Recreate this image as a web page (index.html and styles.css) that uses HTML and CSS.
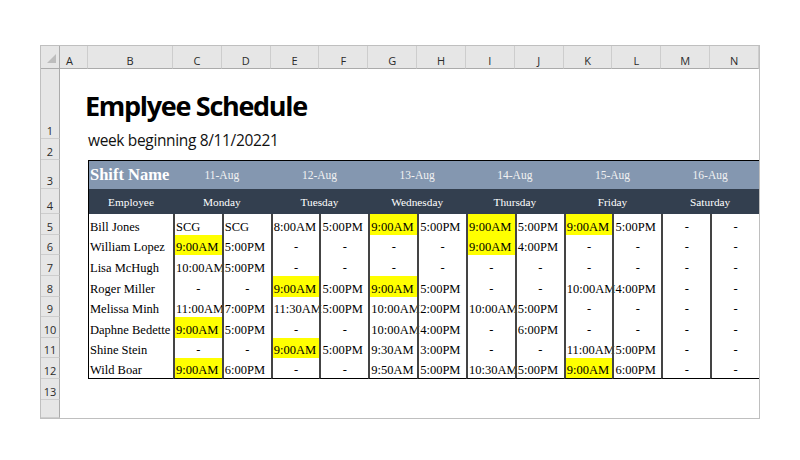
FILE: index.html
```html
<!DOCTYPE html>
<html>
<head>
<meta charset="utf-8">
<title>Employee Schedule</title>
<link rel="stylesheet" href="styles.css">
</head>
<body>
<div class="sheet">
  <div class="row">
    <div class="corner"><svg width="9" height="9" viewBox="0 0 9 9"><polygon points="9,0 9,9 0,9" fill="#bdbdbd"/></svg></div>
    <div class="ch ch-a">A</div><div class="ch">B</div><div class="ch">C</div><div class="ch">D</div><div class="ch">E</div><div class="ch">F</div><div class="ch">G</div><div class="ch">H</div><div class="ch">I</div><div class="ch">J</div><div class="ch">K</div><div class="ch">L</div><div class="ch">M</div><div class="ch">N</div>
  </div>

  <div class="title-cell">
    <h1>Emplyee Schedule</h1>
    <p>week beginning 8/11/20221</p>
  </div>

  <div class="row"><div class="rh">1</div><div class="blank"></div></div>
  <div class="row"><div class="rh">2</div><div class="blank"></div></div>

  <div class="row">
    <div class="rh">3</div><div class="blank"></div>
    <div class="sh sh-name">Shift Name</div>
    <div class="sh">11-Aug</div><div class="sh">12-Aug</div><div class="sh">13-Aug</div><div class="sh">14-Aug</div><div class="sh">15-Aug</div><div class="sh">16-Aug</div>
  </div>

  <div class="row">
    <div class="rh">4</div><div class="blank"></div>
    <div class="dh dh-emp">Employee</div>
    <div class="dh">Monday</div><div class="dh">Tuesday</div><div class="dh">Wednesday</div><div class="dh">Thursday</div><div class="dh">Friday</div><div class="dh">Saturday</div>
  </div>

  <div class="row">
    <div class="rh">5</div><div class="blank"></div>
    <div class="nm">Bill Jones</div>
    <div class="c">SCG</div><div class="c">SCG</div><div class="c">8:00AM</div><div class="c">5:00PM</div><div class="c y">9:00AM</div><div class="c">5:00PM</div><div class="c y">9:00AM</div><div class="c">5:00PM</div><div class="c y">9:00AM</div><div class="c">5:00PM</div><div class="c m">-</div><div class="c m">-</div>
  </div>

  <div class="row">
    <div class="rh">6</div><div class="blank"></div>
    <div class="nm">William Lopez</div>
    <div class="c y">9:00AM</div><div class="c">5:00PM</div><div class="c m">-</div><div class="c m">-</div><div class="c m">-</div><div class="c m">-</div><div class="c y">9:00AM</div><div class="c">4:00PM</div><div class="c m">-</div><div class="c m">-</div><div class="c m">-</div><div class="c m">-</div>
  </div>

  <div class="row">
    <div class="rh">7</div><div class="blank"></div>
    <div class="nm">Lisa McHugh</div>
    <div class="c">10:00AM</div><div class="c">5:00PM</div><div class="c m">-</div><div class="c m">-</div><div class="c m">-</div><div class="c m">-</div><div class="c m">-</div><div class="c m">-</div><div class="c m">-</div><div class="c m">-</div><div class="c m">-</div><div class="c m">-</div>
  </div>

  <div class="row">
    <div class="rh">8</div><div class="blank"></div>
    <div class="nm">Roger Miller</div>
    <div class="c m">-</div><div class="c m">-</div><div class="c y">9:00AM</div><div class="c">5:00PM</div><div class="c y">9:00AM</div><div class="c">5:00PM</div><div class="c m">-</div><div class="c m">-</div><div class="c">10:00AM</div><div class="c">4:00PM</div><div class="c m">-</div><div class="c m">-</div>
  </div>

  <div class="row">
    <div class="rh">9</div><div class="blank"></div>
    <div class="nm">Melissa Minh</div>
    <div class="c">11:00AM</div><div class="c">7:00PM</div><div class="c">11:30AM</div><div class="c">5:00PM</div><div class="c">10:00AM</div><div class="c">2:00PM</div><div class="c">10:00AM</div><div class="c">5:00PM</div><div class="c m">-</div><div class="c m">-</div><div class="c m">-</div><div class="c m">-</div>
  </div>

  <div class="row">
    <div class="rh">10</div><div class="blank"></div>
    <div class="nm">Daphne Bedette</div>
    <div class="c y">9:00AM</div><div class="c">5:00PM</div><div class="c m">-</div><div class="c m">-</div><div class="c">10:00AM</div><div class="c">4:00PM</div><div class="c m">-</div><div class="c">6:00PM</div><div class="c m">-</div><div class="c m">-</div><div class="c m">-</div><div class="c m">-</div>
  </div>

  <div class="row">
    <div class="rh">11</div><div class="blank"></div>
    <div class="nm">Shine Stein</div>
    <div class="c m">-</div><div class="c m">-</div><div class="c y">9:00AM</div><div class="c">5:00PM</div><div class="c">9:30AM</div><div class="c">3:00PM</div><div class="c m">-</div><div class="c m">-</div><div class="c">11:00AM</div><div class="c">5:00PM</div><div class="c m">-</div><div class="c m">-</div>
  </div>

  <div class="row last">
    <div class="rh">12</div><div class="blank"></div>
    <div class="nm">Wild Boar</div>
    <div class="c y">9:00AM</div><div class="c">6:00PM</div><div class="c m">-</div><div class="c m">-</div><div class="c">9:50AM</div><div class="c">5:00PM</div><div class="c">10:30AM</div><div class="c">5:00PM</div><div class="c y">9:00AM</div><div class="c">6:00PM</div><div class="c m">-</div><div class="c m">-</div>
  </div>

  <div class="row"><div class="rh">13</div><div class="blank wide"></div></div>
  <div class="row"><div class="rh"></div><div class="blank wide"></div></div>
</div>
</body>
</html>
```

FILE: styles.css
```css
* {
  box-sizing: border-box;
  margin: 0;
  padding: 0;
}

body {
  background: #ffffff;
  font-family: "Open Sans", "Noto Sans", sans-serif;
}

.sheet {
  margin: 45px 0 0 40px;
  width: 720px;
  height: 374px;
  border: 1px solid #bfbfbf;
  display: grid;
  grid-template-columns: 19px 28px 85px repeat(12, minmax(0, 1fr));
  grid-template-rows: 23px 70px 21px 29px 25px repeat(8, 20.625px) 21px 1fr;
  overflow: hidden;
  background: #ffffff;
}

.row {
  display: contents;
}

/* sheet chrome */
.corner {
  background: #e6e6e6;
  border-right: 1px solid #ababab;
  border-bottom: 1px solid #ababab;
  display: flex;
  justify-content: flex-end;
  align-items: flex-end;
  padding: 0 3px 5px 0;
}

.corner svg {
  display: block;
}

.ch {
  background: #e6e6e6;
  border-bottom: 1px solid #ababab;
  border-right: 1px solid #cdcdcd;
  color: #2b2b2b;
  font-size: 11px;
  line-height: 13px;
  display: flex;
  justify-content: center;
  align-items: flex-end;
  padding-bottom: 1px;
}

.ch-a {
  justify-content: flex-start;
  padding-left: 6px;
}

.rh {
  grid-column: 1;
  background: #e6e6e6;
  border-right: 1px solid #ababab;
  border-bottom: 1px solid #cdcdcd;
  color: #2b2b2b;
  font-size: 11px;
  line-height: 13px;
  display: flex;
  justify-content: center;
  align-items: flex-end;
  padding-bottom: 1px;
}

.blank.wide {
  grid-column: span 14;
}

/* title block */
.title-cell {
  grid-column: 3 / -1;
  grid-row: 2 / 4;
  padding-top: 21px;
  color: #000000;
}

.title-cell h1 {
  font-size: 27px;
  line-height: 32px;
  font-weight: 700;
  letter-spacing: -1.3px;
  margin-left: -3px;
}

.title-cell p {
  font-size: 15.5px;
  line-height: 20px;
  letter-spacing: -0.35px;
  margin-top: 8px;
  color: #111111;
}

/* table */
.sh,
.dh,
.nm,
.c {
  font-family: "Liberation Serif", "Times New Roman", serif;
  white-space: nowrap;
}

.sh {
  grid-column: span 2;
  background: #8497b0;
  border-top: 1px solid #000000;
  color: #f2f2f2;
  font-size: 11.5px;
  display: flex;
  justify-content: center;
  align-items: center;
}

.sh-name {
  grid-column: span 1;
  justify-content: flex-start;
  border-left: 1px solid #000000;
  padding-left: 1px;
  color: #ffffff;
  font-size: 16.5px;
  font-weight: 700;
}

.dh {
  grid-column: span 2;
  background: #333f4f;
  color: #ffffff;
  font-size: 11.3px;
  display: flex;
  justify-content: center;
  align-items: center;
}

.dh-emp {
  grid-column: span 1;
  border-left: 1px solid #000000;
}

.nm,
.c {
  font-size: 12.5px;
  line-height: 15px;
  color: #000000;
  display: flex;
  align-items: flex-end;
  padding-left: 1px;
}

.nm {
  border-left: 1px solid #000000;
}

.c {
  border-left: 2px solid #444444;
}

.c.m {
  justify-content: center;
  padding-left: 0;
}

.c.y {
  background: #ffff00;
}

.last .nm,
.last .c {
  border-bottom: 1px solid #000000;
}
```
